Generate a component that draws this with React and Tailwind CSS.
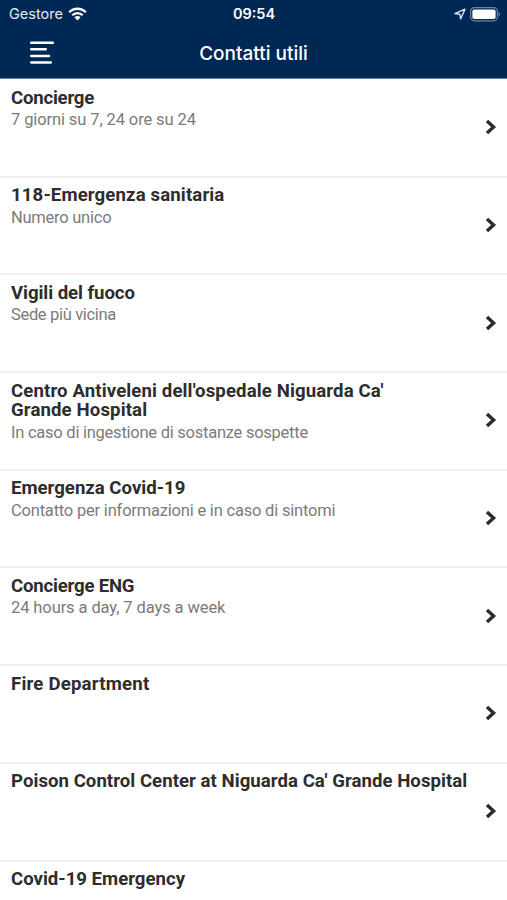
import React from 'react';

const contacts = [
  {
    title: 'Concierge',
    subtitle: '7 giorni su 7, 24 ore su 24',
    titleClass: 'tracking-[-0.22px]',
    subtitleClass: 'tracking-[-0.11px]',
  },
  {
    title: '118-Emergenza sanitaria',
    subtitle: 'Numero unico',
    titleClass: 'tracking-[0.13px]',
    subtitleClass: 'tracking-[-0.25px]',
  },
  {
    title: 'Vigili del fuoco',
    subtitle: 'Sede più vicina',
    titleClass: 'tracking-[-0.06px]',
    subtitleClass: 'tracking-[-0.33px]',
  },
  {
    title: "Centro Antiveleni dell'ospedale Niguarda Ca' Grande Hospital",
    subtitle: 'In caso di ingestione di sostanze sospette',
    titleClass: 'max-w-[400px] tracking-[0.12px]',
    subtitleClass: 'tracking-[-0.25px]',
  },
  {
    title: 'Emergenza Covid-19',
    subtitle: 'Contatto per informazioni e in caso di sintomi',
    titleClass: '',
    subtitleClass: 'tracking-[-0.2px]',
  },
  {
    title: 'Concierge ENG',
    subtitle: '24 hours a day, 7 days a week',
    titleClass: 'tracking-[-0.2px]',
    subtitleClass: 'tracking-[-0.1px]',
  },
  { title: 'Fire Department', subtitle: '', titleClass: 'tracking-[0.2px]', subtitleClass: '' },
  {
    title: "Poison Control Center at Niguarda Ca' Grande Hospital",
    subtitle: '',
    titleClass: 'tracking-[0.04px]',
    subtitleClass: '',
  },
  { title: 'Covid-19 Emergency', subtitle: '', titleClass: '', subtitleClass: '' },
];

const WifiIcon = () => (
  <svg className="h-[14px] w-[19px]" viewBox="0 0 19 14" fill="none" stroke="white" strokeWidth="2.3">
    <path d="M1.2 5.2C5.8 .6 13.2 .6 17.8 5.2" />
    <path d="M4.3 8.3C7.2 5.4 11.8 5.4 14.7 8.3" />
    <path d="M9.5 13.4L6.4 10.3C8.1 8.6 10.9 8.6 12.6 10.3Z" fill="white" stroke="none" />
  </svg>
);

const LocationIcon = () => (
  <svg className="h-3 w-3" viewBox="0 0 12 12" fill="none" stroke="#dce6f2" strokeWidth="1.4" strokeLinejoin="round">
    <path d="M0.9 5.6L11 1.2L6.7 10.8L5.8 6.3Z" />
  </svg>
);

const BatteryIcon = () => (
  <svg className="h-[15px] w-[31px]" viewBox="0 0 31 15">
    <rect x="0.6" y="0.6" width="26.8" height="13.2" rx="3.8" fill="none" stroke="#6e839f" strokeWidth="1.2" />
    <rect x="2.4" y="2.4" width="23.2" height="9.6" rx="1.8" fill="white" />
    <path d="M28.6 5C30.4 5.6 30.4 8.8 28.6 9.4Z" fill="#6e839f" />
  </svg>
);

const MenuIcon = () => (
  <svg className="h-6 w-[26px]" viewBox="0 0 26 24" stroke="white" strokeWidth="2.5" strokeLinecap="round">
    <path d="M1.2 1.8H22.8M1.2 8.2H15.8M1.2 14.9H19M1.2 21.4H20.8" />
  </svg>
);

const ChevronIcon = () => (
  <svg className="mb-px h-4 w-3 shrink-0" viewBox="0 0 12 16" fill="none" stroke="#2b2b2b" strokeWidth="3.4">
    <path d="M2 1.9L8.6 8L2 14.1" />
  </svg>
);

const ContactRow = ({ contact }) => (
  <li className="flex h-[97.7px] shrink-0 items-center border-b-2 border-[#f0f0f1] pr-2.5 pl-[11px]">
    <div className="h-full flex-1 pt-[8.5px]">
      <h2 className={`text-[18.6px] leading-[19.5px] font-bold text-[#2d2d2d] ${contact.titleClass}`}>
        {contact.title}
      </h2>
      {contact.subtitle && (
        <p className={`text-[16.5px] leading-[23.6px] text-[#7b7b7b] ${contact.subtitleClass}`}>{contact.subtitle}</p>
      )}
    </div>
    <ChevronIcon />
  </li>
);

const App = () => {
  return (
    <div className="flex h-[900px] w-full flex-col overflow-hidden bg-white font-['Roboto',sans-serif]">
      <header className="h-[79px] shrink-0 border-b border-[#6583ab] bg-[#002855] font-['Inter',sans-serif] text-white">
        {/* Status bar */}
        <div className="grid h-7 grid-cols-[1fr_auto_1fr] items-center pr-1.5 pl-[7px]">
          <div className="flex items-center gap-[5px] pl-0.5 text-[14.5px] text-[#e4ebf3]">
            <span>Gestore</span>
            <WifiIcon />
          </div>
          <span className="text-center text-[14.5px] font-semibold">09:54</span>
          <div className="flex items-center justify-end gap-1">
            <LocationIcon />
            <BatteryIcon />
          </div>
        </div>

        {/* Title bar */}
        <div className="grid h-[50px] grid-cols-[1fr_auto_1fr] items-center px-[30px]">
          <button type="button" aria-label="Menu" className="w-fit">
            <MenuIcon />
          </button>
          <h1 className="pt-0.5 text-[19px] font-medium">Contatti utili</h1>
        </div>
      </header>

      {/* Contact list */}
      <ul className="flex flex-col pt-px">
        {contacts.map((contact) => (
          <ContactRow key={contact.title} contact={contact} />
        ))}
      </ul>
    </div>
  );
};

export default App;
